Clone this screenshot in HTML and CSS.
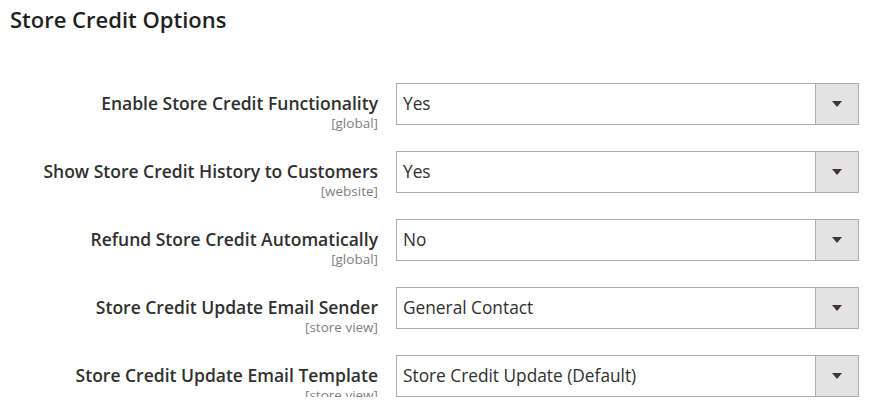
FILE: index.html
```html
<!DOCTYPE html>
<html>
<head>
<meta charset="utf-8">
<link rel="stylesheet" href="styles.css">
</head>
<body>
<div class="page">
  <h2 class="title">Store Credit Options</h2>
  <div class="rows">
    <div class="row">
      <div class="label"><span class="name">Enable Store Credit Functionality</span><span class="scope">[global]</span></div>
      <div class="select"><span class="value">Yes</span><span class="btn"><span class="arrow"></span></span></div>
    </div>
    <div class="row">
      <div class="label"><span class="name">Show Store Credit History to Customers</span><span class="scope">[website]</span></div>
      <div class="select"><span class="value">Yes</span><span class="btn"><span class="arrow"></span></span></div>
    </div>
    <div class="row">
      <div class="label"><span class="name">Refund Store Credit Automatically</span><span class="scope">[global]</span></div>
      <div class="select"><span class="value">No</span><span class="btn"><span class="arrow"></span></span></div>
    </div>
    <div class="row">
      <div class="label"><span class="name">Store Credit Update Email Sender</span><span class="scope">[store view]</span></div>
      <div class="select"><span class="value">General Contact</span><span class="btn"><span class="arrow"></span></span></div>
    </div>
    <div class="row">
      <div class="label"><span class="name">Store Credit Update Email Template</span><span class="scope">[store view]</span></div>
      <div class="select"><span class="value">Store Credit Update (Default)</span><span class="btn"><span class="arrow"></span></span></div>
    </div>
  </div>
</div>
</body>
</html>
```
FILE: styles.css
```css
html, body { margin: 0; padding: 0; background: #fff; }
body { font-family: "Open Sans", "Liberation Sans", sans-serif; color: #303030; }
.page { padding: 5px 10px 0 10px; }
.title { margin: 0; font-size: 22px; font-weight: 600; line-height: 28px; color: #1f1f1f; }
.rows { margin-top: 50px; display: flex; flex-direction: column; gap: 26px; }
.row { display: flex; align-items: flex-start; height: 42px; }
.label { width: 368px; display: flex; flex-direction: column; align-items: flex-end; padding-top: 11px; }
.name { font-size: 17.5px; font-weight: 600; line-height: 19px; color: #303030; }
.scope { font-size: 13.5px; line-height: 15px; color: #808080; margin-top: 3px; }
.select { margin-left: 18px; width: 463px; height: 42px; box-sizing: border-box; border: 1px solid #adadad; display: flex; align-items: center; }
.value { flex: 1; padding-left: 6px; font-size: 17.3px; line-height: 22px; color: #303030; }
.btn { width: 42px; height: 40px; background: #e3e3e3; border-left: 1px solid #adadad; display: flex; align-items: center; justify-content: center; }
.arrow { width: 0; height: 0; border-left: 5px solid transparent; border-right: 5px solid transparent; border-top: 6px solid #41362f; }
```
